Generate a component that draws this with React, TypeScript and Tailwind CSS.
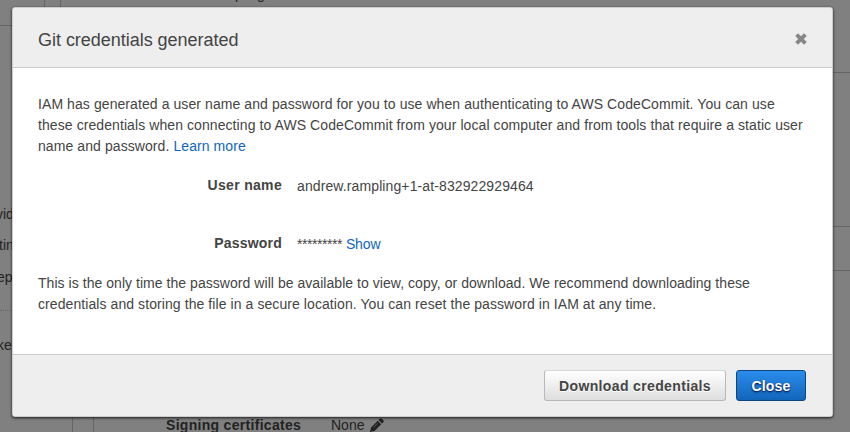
import type { ReactNode } from "react";

function NavText({ className, children }: { className: string; children: ReactNode }) {
  return <span className={`block h-5 whitespace-nowrap leading-5 ${className}`}>{children}</span>;
}

function Backdrop() {
  return (
    <div className="flex h-full w-full flex-col justify-between text-sm text-[#222]">
      <div className="flex h-[400px]">
        <aside className="flex w-[45px] shrink-0 flex-col border-r border-[#656565]">
          <div className="h-[26px] shrink-0 border-b border-[#656565]" />
          <NavText className="mt-[178px] -ml-[4px]">vid</NavText>
          <NavText className="mt-[11px] -ml-px">tin</NavText>
          <NavText className="mt-3 -ml-[3px]">ep</NavText>
          <div className="mt-[23px] border-t border-dotted border-[#666]" />
          <NavText className="mt-6 -ml-[3px]">key</NavText>
        </aside>
        <main className="ml-[15px] flex-1 border-l border-[#656565]">
          <div className="-mt-4 h-5 pl-[150px] leading-5">rampling</div>
          <div className="mt-[68px] h-[155px] border-y border-[#656565]" />
          <div className="mt-[43px] border-t border-[#656565]" />
        </main>
      </div>
      <div className="flex h-8 items-end">
        <div className="h-full w-[73px] border-r border-[#656565]" />
        <div className="ml-5 flex h-full flex-1 items-end border-l border-[#656565] pl-[72px] leading-[14px]">
          <b className="w-[165px] tracking-[0.3px]">Signing certificates</b>
          <span>None</span>
          <svg className="ml-[6px] h-[14px] w-[14px]" viewBox="0 0 14 14" fill="#222">
            <path d="M0 14l1-4.500 6.700-6.700 3.500 3.500L4.500 13zM8.500 2l1.300-1.300q1-1 2 0l1.500 1.500q1 1 0 2L12 5.500z" />
            <path d="M3.500 9.300l4-4" stroke="#808080" strokeWidth=".6" />
          </svg>
        </div>
      </div>
    </div>
  );
}

function CredentialRow({ label, children }: { label: ReactNode; children: ReactNode }) {
  return (
    <div className="flex h-[21px] leading-[21px]">
      <b className="-mt-px w-[244px] text-right">{label}</b>
      <span className="ml-[15px]">{children}</span>
    </div>
  );
}

export default function App() {
  return (
    <div className="relative h-[432px] w-[850px] overflow-hidden bg-[#808080] font-['Liberation_Sans',Arial,sans-serif]">
      <Backdrop />
      <section
        role="dialog"
        className="absolute left-3 top-[7px] flex h-[410px] w-[821px] flex-col overflow-hidden rounded-[3px] border border-[#ccc] bg-white text-sm text-[#444] shadow-[0_1px_3px_0_rgba(0,0,0,0.8)]"
      >
        <header className="flex h-[60px] shrink-0 items-center justify-between border-b border-[#ccc] bg-[#eee] pl-[25px] pr-[25px]">
          <h1 className="pt-1 text-lg tracking-[-0.03px]">Git credentials generated</h1>
          <svg className="mt-[2px] h-3 w-3" viewBox="0 0 12 12" stroke="#888" strokeWidth="4">
            <path d="M1.600 1.600l8.800 8.800M10.400 1.600L1.600 10.400" />
          </svg>
        </header>
        <div className="flex flex-1 flex-col pl-[25px] pt-[26px] leading-[21px]">
          <p className="whitespace-nowrap tracking-[0.082px]">
            IAM has generated a user name and password for you to use when authenticating to AWS CodeCommit. You can use
            <br />
            these credentials when connecting to AWS CodeCommit from your local computer and from tools that require a static user
            <br />
            name and password. <a className="text-[#1166bb]">Learn more</a>
          </p>
          <div className="mt-[19px] flex flex-col gap-[37px]">
            <CredentialRow label={<span className="tracking-[0.32px]">User name</span>}>
              <span className="tracking-[0.11px]">andrew.rampling+1-at-832922929464</span>
            </CredentialRow>
            <CredentialRow label={<span className="tracking-[0.2px]">Password</span>}>
              <span className="tracking-[-0.45px]">*********</span> <a className="text-[#1166bb] tracking-[-0.1px]">Show</a>
            </CredentialRow>
          </div>
          <p className="mt-[18px] whitespace-nowrap">
            <span className="tracking-[0.045px]">
              This is the only time the password will be available to view, copy, or download. We recommend downloading these
            </span>
            <br />
            <span className="tracking-[0.08px]">
              credentials and storing the file in a secure location. You can reset the password in IAM at any time.
            </span>
          </p>
        </div>
        <footer className="flex h-[62px] shrink-0 justify-end gap-[10px] border-t border-[#ccc] bg-[#eee] pr-[26px] pt-[15px]">
          <button className="h-[31px] w-[182px] rounded-[3px] border border-[#b8b8b8] border-t-[#d5d5d5] bg-linear-to-b from-white to-[#dedede] font-bold tracking-[0.36px] [text-shadow:0_1px_0_#fff]">
            Download credentials
          </button>
          <button className="h-[31px] w-[70px] rounded-[3px] border border-[#0b4680] bg-linear-to-b from-[#2b8ceb] to-[#1166bb] font-bold tracking-[0.2px] text-white [text-shadow:0_1px_2px_#003]">
            Close
          </button>
        </footer>
      </section>
    </div>
  );
}
